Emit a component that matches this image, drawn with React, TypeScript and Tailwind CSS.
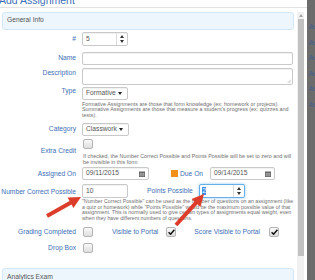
import React from 'react';

const labelCls = 'text-[#3d6fb6] text-[6.7px] leading-[8px] whitespace-nowrap';
const helpCls = 'text-[#6f6f6f] text-[5.4px] whitespace-nowrap';
const boxCls =
  'border border-[#c9c9c9] rounded-[2px] bg-white text-[6.7px] text-[#555] flex items-center pl-[3px] shadow-[inset_0_1px_1px_rgba(0,0,0,0.06)]';

function Row({
  label,
  className = '',
  labelClass = '',
  children,
}: {
  label: string;
  className?: string;
  labelClass?: string;
  children?: React.ReactNode;
}) {
  return (
    <div className={`flex ${className}`}>
      <div className={`w-[76px] shrink-0 text-right ${labelCls} ${labelClass}`}>{label}</div>
      <div className="ml-[6px] flex-1 min-w-0 flex items-center">{children}</div>
    </div>
  );
}

function Spinner() {
  return (
    <div className="ml-auto h-full w-[11px] border-l border-[#dcdcdc] flex flex-col items-center justify-center gap-[2px]">
      <svg width="4" height="3" viewBox="0 0 4 3">
        <path d="M2 0 L4 3 L0 3 Z" fill="#333" />
      </svg>
      <svg width="4" height="3" viewBox="0 0 4 3">
        <path d="M0 0 L4 0 L2 3 Z" fill="#333" />
      </svg>
    </div>
  );
}

function Caret() {
  return (
    <svg width="4" height="3" viewBox="0 0 4 3" className="ml-auto mr-[5px] shrink-0">
      <path d="M0 0 L4 0 L2 3 Z" fill="#222" />
    </svg>
  );
}

function CalendarIcon() {
  return (
    <div className="ml-auto h-full w-[13px] flex items-center justify-center">
      <svg width="6" height="6" viewBox="0 0 6 6">
        <rect x="0" y="0.5" width="6" height="5.5" fill="#666" />
        <rect x="0.8" y="2" width="4.4" height="3.2" fill="#bbb" />
        <path d="M0.8 3.1 H5.2 M0.8 4.2 H5.2 M2.2 2 V5.2 M3.7 2 V5.2" stroke="#666" strokeWidth="0.4" />
      </svg>
    </div>
  );
}

function Checkbox({ checked = false, className = '' }: { checked?: boolean; className?: string }) {
  return (
    <div
      className={`w-[10px] h-[10px] shrink-0 border border-[#b4b4b4] rounded-[2px] bg-gradient-to-b from-[#fafafa] to-[#dedede] flex items-center justify-center ${className}`}
    >
      {checked && (
        <svg width="7" height="6" viewBox="0 0 7 6">
          <path d="M0.6 3.2 L2.6 5.2 L6.4 0.8" stroke="#111" strokeWidth="1.5" fill="none" />
        </svg>
      )}
    </div>
  );
}

function Arrow({ x1, y1, x2, y2 }: { x1: number; y1: number; x2: number; y2: number }) {
  const dx = x2 - x1;
  const dy = y2 - y1;
  const len = Math.sqrt(dx * dx + dy * dy);
  const ux = dx / len;
  const uy = dy / len;
  const px = -uy;
  const py = ux;
  const head = 12;
  const hw = 6;
  const sw = 2;
  const bx = x2 - ux * head;
  const by = y2 - uy * head;
  const pts = [
    [x1 + px * sw, y1 + py * sw],
    [bx + px * sw, by + py * sw],
    [bx + px * hw, by + py * hw],
    [x2, y2],
    [bx - px * hw, by - py * hw],
    [bx - px * sw, by - py * sw],
    [x1 - px * sw, y1 - py * sw],
  ]
    .map(p => p.join(','))
    .join(' ');
  return <polygon points={pts} fill="#dc3d2a" />;
}

export default function App() {
  return (
    <div className="relative w-[315px] h-[280px] overflow-hidden flex bg-[#6c6c6c] font-['Liberation_Sans',Arial,sans-serif]">
      <div className="w-[307px] h-full bg-white flex flex-col shrink-0">
        <div className="h-[8px] border-b border-[#e3e3e3] overflow-hidden flex">
          <div className="text-[#3d6fb6] text-[10.5px] leading-[10px] mt-[-5px] ml-[-1px] whitespace-nowrap">
            Add Assignment
          </div>
          <div className="ml-auto mr-[5px] text-[#999] text-[8px] leading-[8px] mt-[-5px]">×</div>
        </div>
        <div className="flex flex-1 min-h-0">
          <div className="w-[296px] shrink-0 overflow-hidden">
            <div className="mt-[3.5px] ml-[1.5px] w-[292px] h-[18px] rounded-[3px] border border-[#d3e6f5] bg-[#eef6fd] flex items-center pl-[4.5px] text-[#555] text-[6.7px]">
              General Info
            </div>

            <Row label="#" className="mt-[2.5px] h-[14px] items-center">
              <div className={`${boxCls} w-[46px] h-[14px]`}>
                5
                <Spinner />
              </div>
            </Row>

            <Row label="Name" className="mt-[5.5px] h-[13.5px] items-center">
              <div className={`${boxCls} w-[211px] h-[13.5px]`} />
            </Row>

            <Row label="Description" className="mt-[3px] h-[17px]" labelClass="pt-[1px]">
              <div className={`${boxCls} w-[211px] h-[17px] relative`}>
                <svg width="4" height="4" viewBox="0 0 4 4" className="absolute right-[1px] bottom-[1px]">
                  <path d="M0.5 4 L4 0.5 M2.2 4 L4 2.2" stroke="#999" strokeWidth="0.5" />
                </svg>
              </div>
            </Row>

            <Row label="Type" className="mt-[2px] h-[13px]">
              <div className={`${boxCls} w-[46px] h-[13px] text-[#333]`}>
                Formative
                <Caret />
              </div>
            </Row>

            <div className={`ml-[82px] mt-[1.5px] leading-[5.5px] ${helpCls}`}>
              Formative Assignments are those that form knowledge (ex: homework or projects).
              <br />
              Summative Assignments are those that measure a student's progress (ex: quizzes and
              <br />
              tests).
            </div>

            <Row label="Category" className="mt-[5px] h-[13px]" labelClass="pt-[2px]">
              <div className={`${boxCls} w-[47px] h-[13px] text-[#333]`}>
                Classwork
                <Caret />
              </div>
            </Row>

            <div className="flex mt-[2.5px]">
              <div className={`w-[76px] shrink-0 text-right pt-[8px] ${labelCls}`}>Extra Credit</div>
              <div className="ml-[7px] flex flex-col">
                <Checkbox />
                <div className={`mt-[4px] leading-[6px] ${helpCls}`}>
                  If checked, the Number Correct Possible and Points Possible will be set to zero and will
                  <br />
                  be invisible in this form
                </div>
              </div>
            </div>

            <Row label="Assigned On" className="mt-[2.5px] h-[13px] items-center">
              <div className={`${boxCls} w-[67px] h-[13px]`}>
                09/11/2015
                <CalendarIcon />
              </div>
              <div className="ml-[22px] w-[7px] h-[7px] bg-[#f39019] shrink-0" />
              <div className={`ml-[2px] ${labelCls}`}>Due On</div>
              <div className={`${boxCls} ml-[7px] w-[65px] h-[13px]`}>
                09/14/2015
                <CalendarIcon />
              </div>
            </Row>

            <Row label="Number Correct Possible" className="mt-[4px] h-[13.5px] items-center" labelClass="pt-[3px]">
              <div className={`${boxCls} w-[46px] h-[13.5px]`}>10</div>
              <div className={`ml-[19px] ${labelCls}`}>Points Possible</div>
              <div className="ml-[6px] w-[46px] h-[13.5px] border border-[#66afe9] rounded-[2px] bg-white flex items-center pl-[2px] shadow-[0_0_3px_rgba(102,175,233,0.7)]">
                <span className="bg-[#3a8ee6] text-white text-[6.7px] leading-[8px] px-[0.5px]">2</span>
                <Spinner />
              </div>
            </Row>

            <div className="ml-[82px] mt-[1.5px] leading-[5.6px] text-[#6f6f6f] text-[5.25px] whitespace-nowrap">
              "Number Correct Possible" can be used as the number of questions on an assignment (like
              <br />
              a quiz or homework) while "Points Possible" would be the maximum possible value of that
              <br />
              assignment. This is normally used to give certain types of assignments equal weight, even
              <br />
              when they have different numbers of questions.
            </div>

            <Row label="Grading Completed" className="mt-[5.5px] h-[10px] items-center">
              <Checkbox className="ml-[1px]" />
              <div className={`ml-[19px] ${labelCls}`}>Visible to Portal</div>
              <Checkbox checked className="ml-[8px]" />
              <div className={`ml-[18px] ${labelCls}`}>Score Visible to Portal</div>
              <Checkbox checked className="ml-[9px]" />
            </Row>

            <Row label="Drop Box" className="mt-[6px] h-[10px] items-center">
              <Checkbox className="ml-[1px]" />
            </Row>

            <div className="mt-[15px] ml-[1.5px] w-[292px] h-[18px] rounded-[3px] border border-[#d3e6f5] bg-[#eef6fd] flex items-center pl-[4.5px] text-[#555] text-[6.7px]">
              Analytics Exam
            </div>
          </div>

          <div className="w-[7px] ml-[1px] mt-[4px] bg-[#f1f1f1] flex flex-col items-center">
            <svg width="4" height="3" viewBox="0 0 4 3" className="mt-[2px]">
              <path d="M2 0 L4 3 L0 3 Z" fill="#a3a3a3" />
            </svg>
            <div className="mt-[2px] w-[6px] h-[237px] bg-[#c1c1c1]" />
          </div>
        </div>
      </div>

      <div className="flex-1 overflow-hidden flex flex-col pt-[23px] gap-[7.5px] pl-[2px]">
        {[0, 1, 2, 3, 4, 5].map(i => (
          <div key={i} className="text-[#3f5f8c] text-[7px] leading-[8px] whitespace-nowrap">
            Ass
          </div>
        ))}
      </div>

      <svg className="absolute inset-0 pointer-events-none" width="315" height="280" viewBox="0 0 315 280">
        <Arrow x1={47} y1={216} x2={81} y2={197} />
        <Arrow x1={176} y1={225} x2={204} y2={194} />
      </svg>
    </div>
  );
}
